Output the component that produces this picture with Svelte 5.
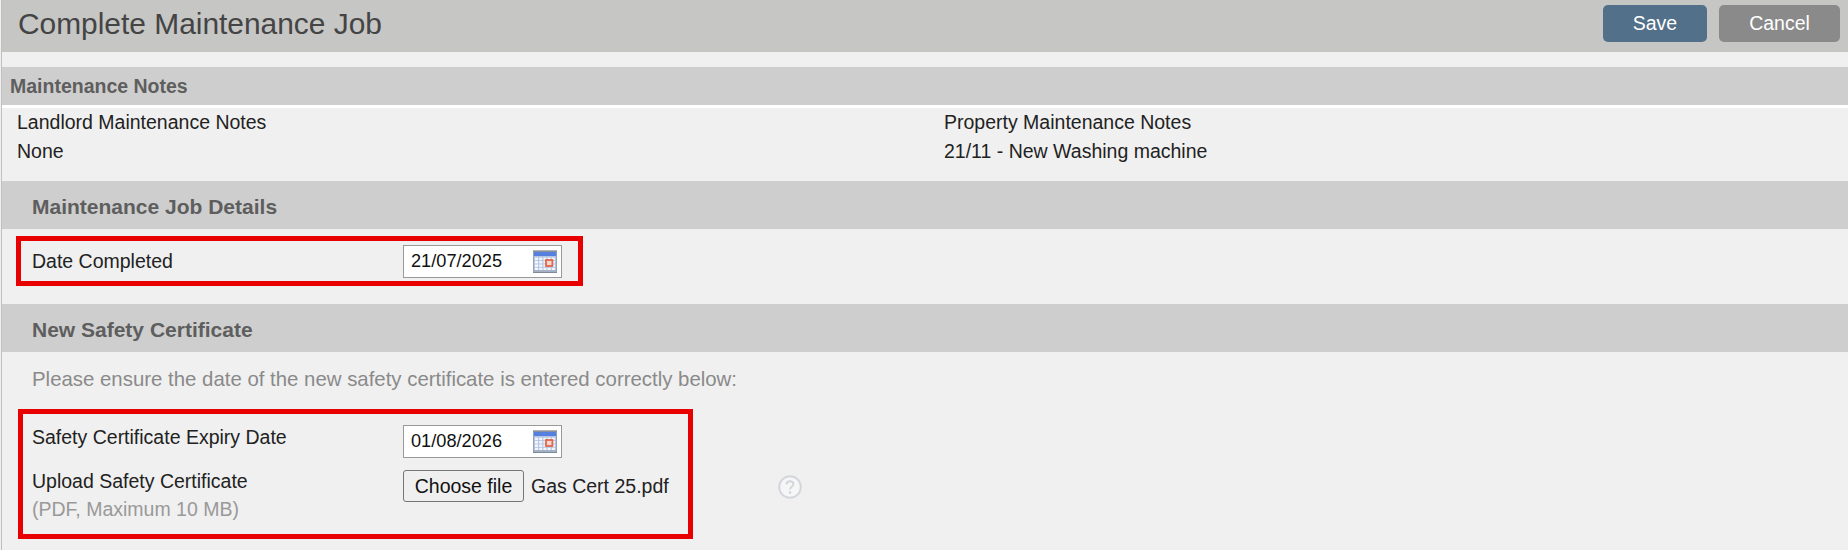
<script>
  const cols = [0, 1, 2, 3, 4];
</script>

{#snippet calendar()}
  <svg class="cal" viewBox="0 0 24 23" aria-hidden="true">
    <rect x="0.5" y="1.5" width="23" height="21" fill="#b4c5e2" stroke="#93a1b6" />
    <rect x="1" y="2" width="22" height="4" fill="#5580de" />
    <path d="M1 1.5V0M3 1.5V0M5 1.5V0M7 1.5V0M9 1.5V0M11 1.5V0M13 1.5V0M15 1.5V0M17 1.5V0M19 1.5V0M21 1.5V0M23 1.5V0" stroke="#666" stroke-width="1" />
    {#each cols as c}
      {#each [0, 1, 2, 3] as r}
        <rect x={2 + c * 4.2} y={7.6 + r * 3.4} width="3.1" height="2.5" fill="#f3f6fc" />
      {/each}
    {/each}
    <rect x="13" y="10" width="6.4" height="6" fill="#f4d8cc" stroke="#e0664c" stroke-width="1.8" />
    <path d="M1 21h22" stroke="#9aa6b6" stroke-width="1.4" />
    <path d="M0 22.5h24" stroke="#7f8a99" stroke-width="1" />
  </svg>
{/snippet}

<div class="page">
  <header class="top">
    <h1>Complete Maintenance Job</h1>
    <div class="actions">
      <button class="btn save">Save</button>
      <button class="btn cancel">Cancel</button>
    </div>
  </header>

  <div class="bar first"><h2>Maintenance Notes</h2></div>
  <div class="notes">
    <div class="note">
      <div>Landlord Maintenance Notes</div>
      <div>None</div>
    </div>
    <div class="note">
      <div>Property Maintenance Notes</div>
      <div>21/11 - New Washing machine</div>
    </div>
  </div>

  <div class="bar"><h2 class="inset">Maintenance Job Details</h2></div>
  <div class="box box-one">
    <div class="label single">Date Completed</div>
    <div class="date">
      <span>21/07/2025</span>
      {@render calendar()}
    </div>
  </div>

  <div class="bar second"><h2 class="inset">New Safety Certificate</h2></div>
  <p class="hint">Please ensure the date of the new safety certificate is entered correctly below:</p>

  <div class="box box-two">
    <div class="row">
      <div class="label">Safety Certificate Expiry Date</div>
      <div class="date">
        <span>01/08/2026</span>
        {@render calendar()}
      </div>
    </div>
    <div class="row upload">
      <div class="label">
        <div>Upload Safety Certificate</div>
        <div class="muted">(PDF, Maximum 10 MB)</div>
      </div>
      <div class="file">
        <button class="choose">Choose file</button>
        <span>Gas Cert 25.pdf</span>
      </div>
      <svg class="help" viewBox="0 0 24 24" aria-hidden="true">
        <circle cx="12" cy="12" r="10.8" fill="#f6f6f7" stroke="#d3d6db" stroke-width="2" />
        <path d="M8.6 9.4c0-2 1.5-3.2 3.4-3.2s3.4 1.2 3.4 3c0 2.6-3.4 2.6-3.4 5.2" fill="none" stroke="#d3d6db" stroke-width="2" />
        <circle cx="12" cy="17.6" r="1.3" fill="#d3d6db" />
      </svg>
    </div>
  </div>
</div>

<style>
  :global(body) {
    margin: 0;
    background: #f0f0f0;
  }
  .page {
    height: 550px;
    overflow: hidden;
    box-sizing: border-box;
    margin-left: 1px;
    border-left: 1px solid #c0c0c0;
    background: #f0f0f0;
    font-family: "Liberation Sans", Arial, sans-serif;
    font-size: 19.5px;
    color: #222;
  }
  .top {
    height: 52px;
    display: flex;
    align-items: center;
    justify-content: space-between;
    padding: 0 8px 0 16px;
    background: #c6c6c4;
  }
  h1 {
    margin: 0 0 4px;
    font-size: 29.9px;
    font-weight: 400;
    color: #444;
  }
  .actions {
    display: flex;
    gap: 12px;
    margin-bottom: 5px;
  }
  .btn {
    height: 37px;
    border: 0;
    border-radius: 5px;
    color: #fff;
    font: inherit;
    padding: 0;
  }
  .save {
    width: 104px;
    background: #527089;
  }
  .cancel {
    width: 121px;
    background: #8a8a8a;
  }
  .bar {
    height: 48px;
    display: flex;
    align-items: center;
    background: #cecece;
  }
  .bar.first {
    height: 38px;
    margin-top: 15px;
    border-bottom: 3px solid #fff;
  }
  .bar.second {
    margin-top: 18px;
  }
  h2 {
    margin: 0 0 0 8px;
    font-size: 19.5px;
    font-weight: 700;
    color: #5e5e5e;
  }
  h2.inset {
    margin-left: 30px;
    padding-top: 3px;
    font-size: 21px;
  }
  .notes {
    height: 73px;
    display: grid;
    grid-template-columns: 927px 1fr;
    padding-left: 15px;
    box-sizing: border-box;
    line-height: 29px;
  }
  .box {
    border: 5px solid #e80000;
    box-sizing: border-box;
  }
  .box-one {
    width: 567px;
    height: 50px;
    margin: 7px 0 0 14px;
    display: flex;
    align-items: center;
    padding-left: 11px;
  }
  .box-one .label {
    width: 371px;
  }
  .label {
    flex: none;
  }
  .date {
    width: 159px;
    height: 33px;
    box-sizing: border-box;
    border: 1px solid #999;
    background: #fff;
    display: flex;
    align-items: center;
    justify-content: space-between;
    padding: 0 4px 0 7px;
    color: #111;
    font-size: 18.2px;
  }
  .cal {
    width: 24px;
    height: 23px;
    flex: none;
  }
  .hint {
    margin: 16px 0 0 30px;
    line-height: 22px;
    font-size: 20.4px;
    color: #8a8a8a;
  }
  .box-two {
    width: 675px;
    height: 130px;
    margin: 19px 0 0 16px;
    padding: 11px 0 0 9px;
  }
  .row {
    display: flex;
  }
  .row .label {
    width: 371px;
  }
  .row.upload {
    margin-top: 12px;
    position: relative;
  }
  .row.upload .label {
    margin-top: -3px;
  }
  .row .label > div {
    line-height: 28px;
  }
  .row:first-child .label {
    line-height: 24px;
  }
  .muted {
    color: #999;
  }
  .file {
    display: flex;
    align-items: center;
    gap: 7px;
    height: 32px;
    color: #222;
  }
  .choose {
    width: 121px;
    height: 32px;
    box-sizing: border-box;
    padding: 0;
    border: 1px solid #767676;
    border-radius: 3px;
    background: #efefef;
    font: inherit;
    color: #111;
  }
  .help {
    width: 24px;
    height: 24px;
    position: absolute;
    left: 746px;
    top: 5px;
    filter: blur(0.4px);
  }
</style>
